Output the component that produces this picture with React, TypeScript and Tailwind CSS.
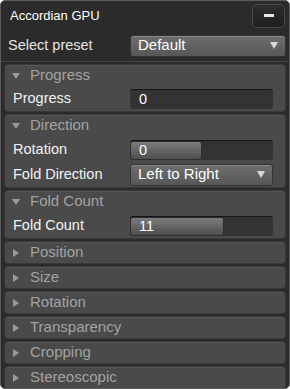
import React from 'react';

function Caret({ open }: { open: boolean }) {
  return open ? (
    <svg width="8" height="6" viewBox="0 0 8 6" className="shrink-0">
      <path d="M0 0 L8 0 L4 6 Z" fill="#9a9a9a" />
    </svg>
  ) : (
    <svg width="6" height="8" viewBox="0 0 6 8" className="ml-[1px] mr-[1px] shrink-0">
      <path d="M0 0 L6 4 L0 8 Z" fill="#9a9a9a" />
    </svg>
  );
}

function SelectBox({ value }: { value: string }) {
  return (
    <div className="flex h-[22px] flex-1 items-center justify-between rounded-[3px] border border-[#333] bg-gradient-to-b from-[#6e6e6e] to-[#575757] pl-[7px] pr-[7px] text-[15px] text-white shadow-[inset_0_1px_0_#888]">
      <span>{value}</span>
      <svg width="8" height="7" viewBox="0 0 8 7">
        <path d="M0 0 L8 0 L4 7 Z" fill="#d8d8d8" />
      </svg>
    </div>
  );
}

function NumberBox({ value, fill }: { value: string; fill?: number }) {
  return (
    <div className="relative flex h-[20px] flex-1 items-center overflow-hidden rounded-[3px] border-t border-[#151515] bg-[#333333]">
      {fill !== undefined && (
        <div
          className="absolute left-0 top-0 h-full rounded-[3px] border border-[#2e2e2e] bg-gradient-to-b from-[#7c7c7c] to-[#4e4e4e]"
          style={{ width: fill }}
        />
      )}
      <span className="relative pl-[9px] text-[14.5px] leading-none text-white">{value}</span>
    </div>
  );
}

function Row({ label, children }: { label: string; children: React.ReactNode }) {
  return (
    <div className="flex h-[25px] items-center pl-[8px] pr-[12px]">
      <span className="w-[117px] shrink-0 text-[14.5px] text-[#f2f2f2]">{label}</span>
      {children}
    </div>
  );
}

function Section({ title, children, padded }: { title: string; children?: React.ReactNode; padded?: boolean }) {
  const open = !!children;
  return (
    <div className="shrink-0 rounded-[4px] border border-[#383838] bg-[#4a4a4a] shadow-[inset_0_1px_0_#555]">
      <div className="flex h-[21px] items-center gap-[10px] pl-[7px]">
        <Caret open={open} />
        <span className="text-[15px] text-[#a3a3a3]">{title}</span>
      </div>
      {open && <div className={padded ? 'pt-[1px]' : ''}>{children}</div>}
    </div>
  );
}

export default function App() {
  return (
    <div className="flex h-[389px] w-[290px] flex-col overflow-hidden rounded-[5px] border border-[#5c5c5c] bg-[#2b2b2b] font-['Liberation_Sans',Arial,sans-serif]">
      {/* Header */}
      <div className="flex h-[29px] shrink-0 items-center justify-between pl-[9px] pr-[4px]">
        <span className="text-[13px] text-white">Accordian GPU</span>
        <button className="flex h-[24px] w-[33px] items-center justify-center rounded-[5px] border border-[#4a4a4a] bg-gradient-to-b from-[#2e2e2e] to-[#1e1e1e]">
          <span className="h-[3px] w-[10px] bg-[#e8e8e8]" />
        </button>
      </div>

      {/* Preset */}
      <div className="flex h-[32px] shrink-0 items-center border-b border-[#444] pl-[7px] pr-[3px]">
        <span className="w-[122px] shrink-0 text-[14.5px] text-[#e6e6e6]">Select preset</span>
        <SelectBox value="Default" />
      </div>

      <div className="flex shrink-0 flex-col gap-[2px] px-[3px] pt-[2px]">
        <Section title="Progress">
          <Row label="Progress">
            <NumberBox value="0" />
          </Row>
        </Section>
        <Section title="Direction" padded>
          <Row label="Rotation">
            <NumberBox value="0" fill={72} />
          </Row>
          <Row label="Fold Direction">
            <SelectBox value="Left to Right" />
          </Row>
        </Section>
        <Section title="Fold Count" padded>
          <Row label="Fold Count">
            <NumberBox value="11" fill={94} />
          </Row>
        </Section>
        <Section title="Position" />
        <Section title="Size" />
        <Section title="Rotation" />
        <Section title="Transparency" />
        <Section title="Cropping" />
        <Section title="Stereoscopic" />
      </div>
    </div>
  );
}
